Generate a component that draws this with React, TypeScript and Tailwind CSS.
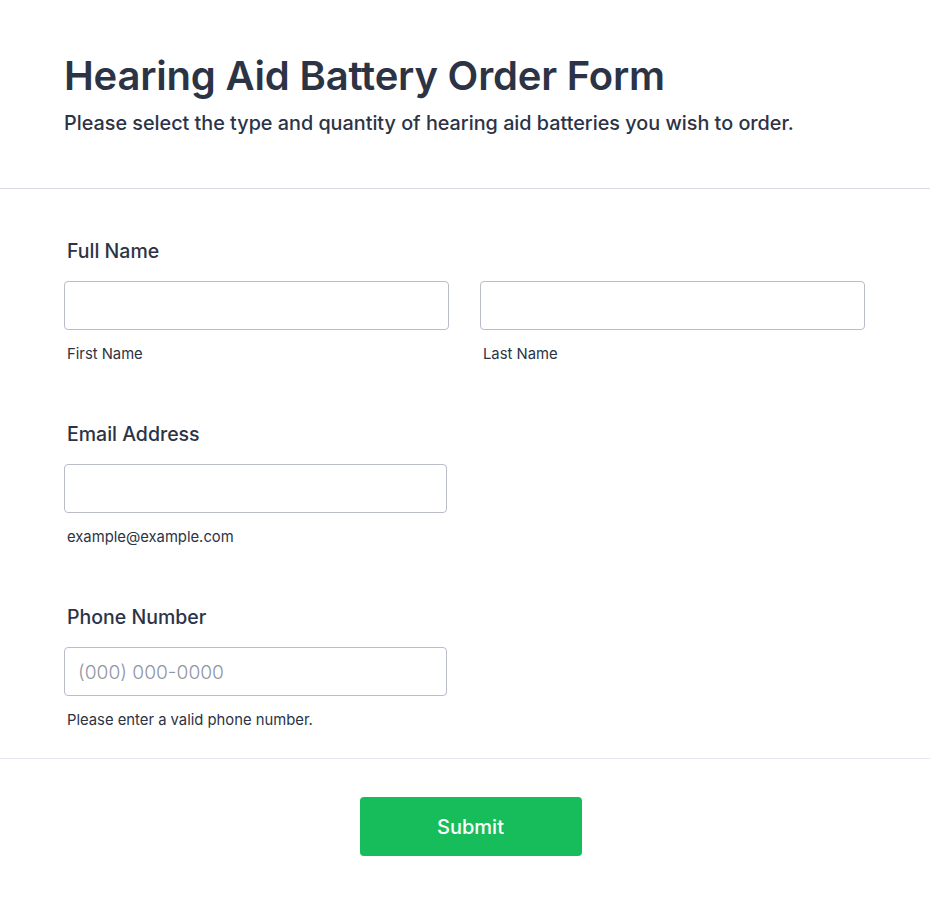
import React from "react";

function Field({ sub, placeholder, className = "" }: { sub: string; placeholder?: string; className?: string }) {
  return (
    <div className={className}>
      <input
        type="text"
        placeholder={placeholder}
        className="block w-full h-[49px] rounded-[4px] border border-[#b8bdc9] bg-white px-[13px] text-[19.2px] font-light text-[#2c3345] placeholder:text-[#8f96a3] outline-none"
      />
      <div className="mt-[15px] pl-[3px] text-[14.8px] leading-[18px] text-[#2c3345]">{sub}</div>
    </div>
  );
}

export default function App() {
  return (
    <div className="min-h-[905px] w-full bg-white text-[#2c3345]" style={{ fontFamily: "Inter, 'Noto Sans', sans-serif" }}>
      <div className="px-[64px] pt-[52px] pb-[50px] border-b border-[#d8dae9]">
        <h1 className="text-[40px] leading-[48px] font-semibold text-[#2c3345] tracking-[-0.2px]">Hearing Aid Battery Order Form</h1>
        <p className="mt-[8px] text-[19.8px] leading-[30px] font-medium text-[#2c3345]">Please select the type and quantity of hearing aid batteries you wish to order.</p>
      </div>
      <div className="px-[64px] pt-[50px]">
        <div>
          <div className="pl-[3px] text-[19.5px] leading-[24px] font-medium">Full Name</div>
          <div className="mt-[18px] flex gap-[31px] w-[801px]">
            <Field sub="First Name" className="flex-1" />
            <Field sub="Last Name" className="flex-1" />
          </div>
        </div>
        <div className="mt-[59px]">
          <div className="pl-[3px] text-[19.5px] leading-[24px] font-medium">Email Address</div>
          <Field sub="example@example.com" className="mt-[18px] w-[383px]" />
        </div>
        <div className="mt-[59px]">
          <div className="pl-[3px] text-[19.5px] leading-[24px] font-medium">Phone Number</div>
          <Field sub="Please enter a valid phone number." placeholder="(000) 000-0000" className="mt-[18px] w-[383px]" />
        </div>
      </div>
      <div className="mt-[29px] border-t border-[#e6e8f0] flex justify-center pl-[11px] pt-[38px]">
        <button className="w-[222px] h-[59px] rounded-[4px] bg-[#18bd5b] text-white text-[20px] font-medium">Submit</button>
      </div>
    </div>
  );
}
